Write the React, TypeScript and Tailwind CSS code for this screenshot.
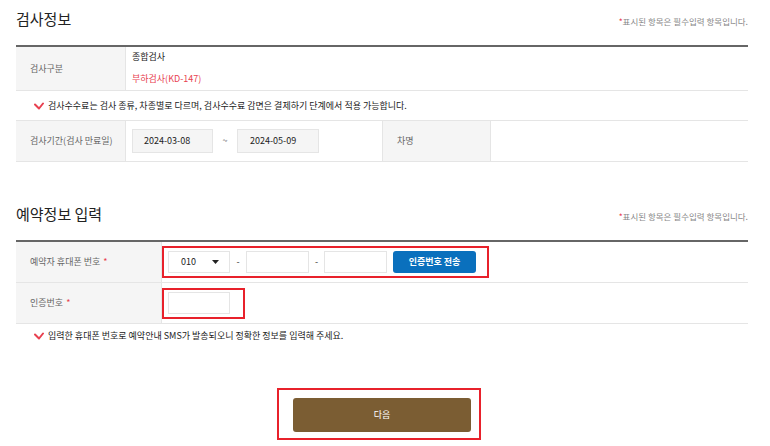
import React from 'react';

const font = { fontFamily: '"Noto Sans CJK KR", "Noto Sans", sans-serif' };

function Check() {
  return (
    <svg width="10" height="8" viewBox="0 0 10 8" className="shrink-0">
      <path d="M1 2.5 L5 6.5 L9 1.5" fill="none" stroke="#e8404f" strokeWidth="2" strokeLinecap="round" strokeLinejoin="round" />
    </svg>
  );
}

function SectionHead({ title }: { title: string }) {
  return (
    <div className="flex items-end justify-between">
      <h2 className="text-[15px] leading-[20px] text-[#222]">{title}</h2>
      <p className="text-[8.5px] leading-[12px] text-[#888] mb-[2px]">
        <span className="text-[#e8404f]">*</span>표시된 항목은 필수입력 항목입니다.
      </p>
    </div>
  );
}

export default function App() {
  return (
    <div className="w-[770px] h-[446px] bg-white overflow-hidden" style={font}>
      <div className="ml-[16px] w-[732px] pt-[9px]">
        {/* 검사정보 */}
        <SectionHead title="검사정보" />
        <div className="mt-[16px] border-t-2 border-[#666]">
          <div className="flex h-[44px] border-b border-[#e5e5e5]">
            <div className="w-[110px] bg-[#f5f5f5] border-r border-[#e5e5e5] flex items-center pl-[14px] text-[9px] text-[#666]">
              검사구분
            </div>
            <div className="flex-1 pl-[6px] pt-[4px] text-[9px] leading-[12px]">
              <p className="text-[#222]">종합검사</p>
              <p className="mt-[10px] text-[#e8404f]">부하검사(KD-147)</p>
            </div>
          </div>
          <div className="flex items-center gap-[4px] h-[30px] pl-[18px] border-b border-[#e5e5e5] text-[9px] text-[#222]">
            <Check />
            <span>검사수수료는 검사 종류, 차종별로 다르며, 검사수수료 감면은 결제하기 단계에서 적용 가능합니다.</span>
          </div>
          <div className="flex h-[41px] border-b border-[#e5e5e5]">
            <div className="w-[110px] bg-[#f5f5f5] border-r border-[#e5e5e5] flex items-center pl-[14px] text-[9px] text-[#666]">
              검사기간(검사 만료일)
            </div>
            <div className="w-[256px] flex items-center pl-[6px] text-[9px] text-[#222]">
              <div className="w-[81px] h-[24px] bg-[#f5f5f5] border border-[#e5e5e5] flex items-center pl-[11px]">2024-03-08</div>
              <span className="w-[24px] text-center text-[#555]">~</span>
              <div className="w-[82px] h-[24px] bg-[#f5f5f5] border border-[#e5e5e5] flex items-center pl-[12px]">2024-05-09</div>
            </div>
            <div className="w-[109px] bg-[#f5f5f5] border-x border-[#e5e5e5] flex items-center pl-[14px] text-[9px] text-[#666]">
              차명
            </div>
            <div className="flex-1" />
          </div>
        </div>

        {/* 예약정보 입력 */}
        <div className="mt-[42px]">
          <SectionHead title="예약정보 입력" />
        </div>
        <div className="mt-[16px] border-t-2 border-[#666]">
          <div className="flex h-[41px] border-b border-[#e5e5e5]">
            <div className="w-[146px] bg-[#f5f5f5] border-r border-[#e5e5e5] flex items-center pl-[14px] text-[9px] text-[#666]">
              예약자 휴대폰 번호 <span className="ml-[3px] text-[#e8404f]">*</span>
            </div>
            <div className="flex items-center">
              <div className="flex items-center h-[32px] border-2 border-[#e8212b] pl-[4px] pr-[11px]">
                <div className="w-[62px] h-[22px] border border-[#e5e5e5] flex items-center justify-between pl-[12px] pr-[10px] text-[9px] text-[#222]">
                  <span>010</span>
                  <svg width="7" height="4" viewBox="0 0 7 4"><path d="M0 0 H7 L3.5 4 Z" fill="#222" /></svg>
                </div>
                <span className="w-[16px] text-center text-[9px] text-[#333]">-</span>
                <div className="w-[63px] h-[22px] border border-[#e5e5e5]" />
                <span className="w-[15px] text-center text-[9px] text-[#333]">-</span>
                <div className="w-[63px] h-[22px] border border-[#e5e5e5]" />
                <button className="ml-[6px] w-[83px] h-[22px] rounded-[3px] bg-[#0a70bd] text-white text-[9px] font-bold">
                  인증번호 전송
                </button>
              </div>
            </div>
          </div>
          <div className="flex h-[41px] border-b border-[#e5e5e5]">
            <div className="w-[146px] bg-[#f5f5f5] border-r border-[#e5e5e5] flex items-center pl-[14px] text-[9px] text-[#666]">
              인증번호 <span className="ml-[3px] text-[#e8404f]">*</span>
            </div>
            <div className="flex items-center">
              <div className="h-[31px] border-2 border-[#e8212b] pl-[4px] pr-[13px] flex items-center">
                <div className="w-[62px] h-[22px] border border-[#e5e5e5]" />
              </div>
            </div>
          </div>
          <div className="flex items-center gap-[4px] h-[24px] pl-[18px] text-[9px] text-[#222]">
            <Check />
            <span>입력한 휴대폰 번호로 예약안내 SMS가 발송되오니 정확한 정보를 입력해 주세요.</span>
          </div>
        </div>

        <div className="mt-[40px] ml-[261px] w-[204px] h-[52px] border-2 border-[#e8212b] pl-[14px] pt-[8px]">
          <button className="w-[178px] h-[34px] rounded-[3px] bg-[#7b5d33] text-white text-[9px]">다음</button>
        </div>
      </div>
    </div>
  );
}
